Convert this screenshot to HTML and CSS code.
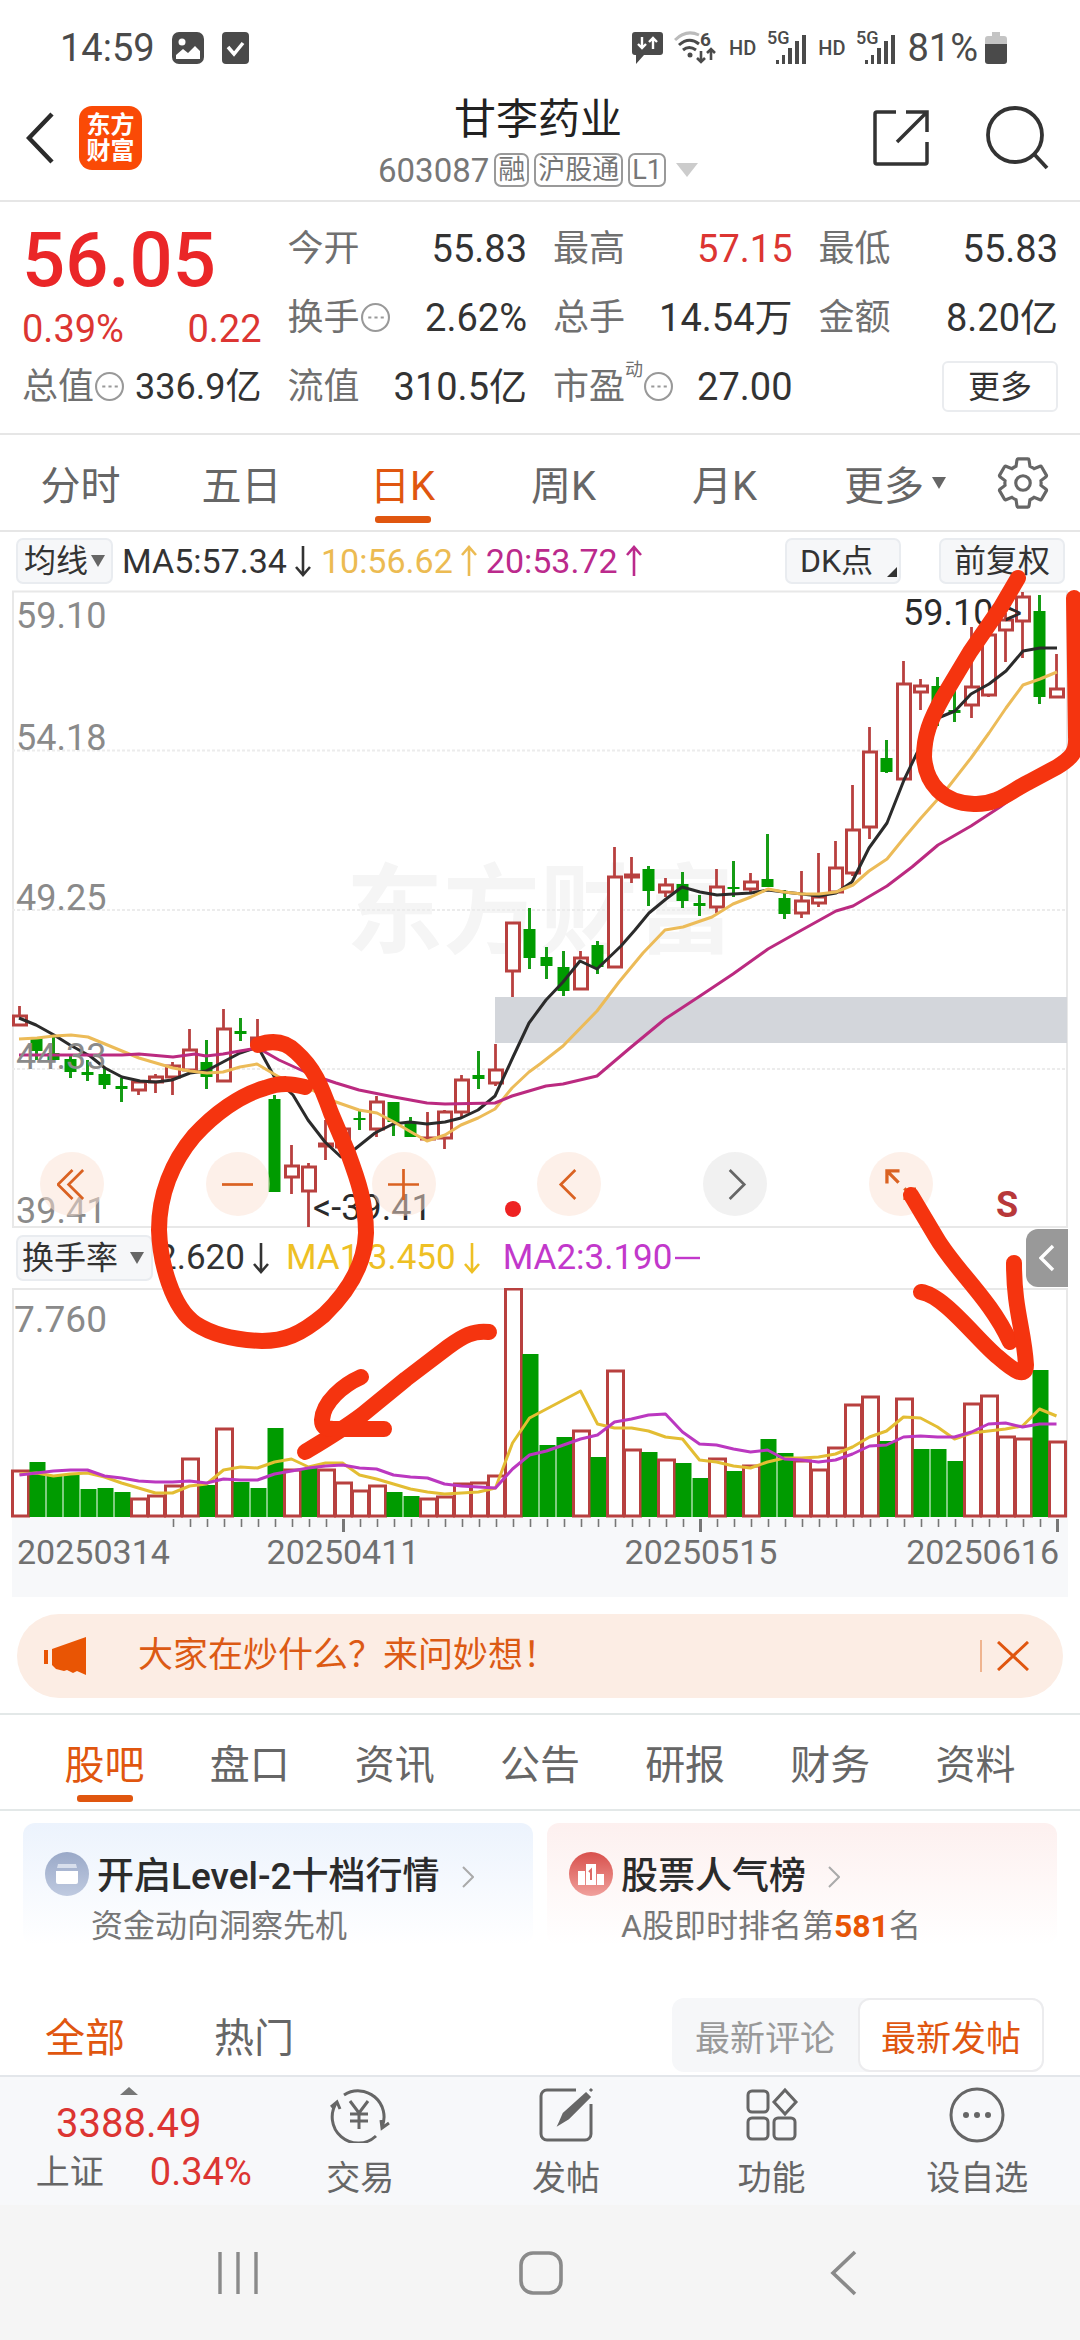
FILE: index.html
```html
<!DOCTYPE html>
<html lang="zh-CN">
<head>
    <meta charset="UTF-8">
    <meta name="viewport" content="width=device-width, initial-scale=1.0">
    <title>甘李药业 603087</title>
    <link rel="stylesheet" href="styles.css">
</head>
<body>
    <div class="status-bar">
        <span class="clock">14:59</span>
        <svg class="st-photo" width="32" height="32" viewBox="0 0 32 32"><rect width="32" height="32" rx="7" fill="#4a4a4a"/><circle cx="10" cy="10" r="3.5" fill="#fff"/><path d="M4 27V23l7-6 5 4 7-7 5 5v8z" fill="#fff"/></svg>
        <svg class="st-check" width="27" height="32" viewBox="0 0 27 32"><rect width="27" height="32" rx="4" fill="#4a4a4a"/><path d="M6 15l6 7 9-11" fill="none" stroke="#fff" stroke-width="3.5"/></svg>
        <div class="status-right">
            <svg width="31" height="32" viewBox="0 0 31 32"><path d="M3 0h25a3 3 0 0 1 3 3v17a3 3 0 0 1-3 3H12l-8 9v-9H3a3 3 0 0 1-3-3V3a3 3 0 0 1 3-3z" fill="#4a4a4a"/><path d="M10 5v11M6 12l4 4 4-4M21 17V7M17 10l4-4 4 4" fill="none" stroke="#fff" stroke-width="2.4"/></svg>
            <svg width="44" height="50" viewBox="0 -8 44 50" fill="none" stroke="#4a4a4a" stroke-width="3"><path d="M1 9Q12-2 25 4" stroke="#bbb"/><path d="M5 14q10-9 20-1M9 19q6-5 13 0"/><circle cx="16" cy="24" r="2.5" fill="#4a4a4a" stroke="none"/><path d="M27 20v11M23 27l4 4 4-4M37 29V18M33 22l4-4 4 4" stroke-width="2.6"/><text x="26" y="15" font-size="19" font-weight="700" fill="#4a4a4a" stroke="none">6</text></svg>
            <span class="hd">HD</span>
            <svg width="40" height="50" viewBox="0 -8 40 50" fill="#4a4a4a"><text x="0" y="13" font-size="18" font-weight="500">5G</text><path d="M9 29h3v4H9zM15 24h3v9h-3zM21 17h4v16h-4zM28 10h4v23h-4zM35 4h4v29h-4z"/></svg>
            <span class="hd">HD</span>
            <svg width="40" height="50" viewBox="0 -8 40 50" fill="#4a4a4a"><text x="0" y="13" font-size="18" font-weight="500">5G</text><path d="M9 29h3v4H9zM15 24h3v9h-3zM21 17h4v16h-4zM28 10h4v23h-4zM35 4h4v29h-4z"/></svg>
            <span class="battery-text">81%</span>
            <svg width="22" height="32" viewBox="0 0 22 32"><path d="M7 0h8v4h4a3 3 0 0 1 3 3v5H0V7a3 3 0 0 1 3-3h4z" fill="#c4c4c4"/><path d="M0 12h22v17a3 3 0 0 1-3 3H3a3 3 0 0 1-3-3z" fill="#4a4a4a"/></svg>
        </div>
    </div>

    <header class="header">
        <div class="header-left">
            <button class="icon-btn" aria-label="返回"><svg width="28" height="52" viewBox="0 0 28 52"><path d="M26 2L3 26l23 24" fill="none" stroke="#2b2b2b" stroke-width="4.5"/></svg></button>
            <a class="logo" href="#">东方<br>财富</a>
        </div>
        <div class="header-title">
            <h1>甘李药业</h1>
            <div class="code-row">
                <span class="code">603087</span>
                <span class="tag">融</span>
                <span class="tag">沪股通</span>
                <span class="tag">L1</span>
                <svg class="code-arrow" width="22" height="14" viewBox="0 0 22 14"><path d="M0 0h22L11 14z" fill="#ccc"/></svg>
            </div>
        </div>
        <div class="header-right">
            <button class="icon-btn" aria-label="分享"><svg width="58" height="58" viewBox="0 0 58 58" fill="none" stroke="#333" stroke-width="3.5"><path d="M24 3H5a2 2 0 0 0-2 2v48a2 2 0 0 0 2 2h48a2 2 0 0 0 2-2V33M34 3h21v20M55 3L25 33"/></svg></button>
            <button class="icon-btn" aria-label="搜索"><svg width="64" height="64" viewBox="0 0 64 64" fill="none" stroke="#333" stroke-width="3.8"><circle cx="29" cy="29" r="27"/><path d="M48 48l13 14"/></svg></button>
        </div>
    </header>

    <section class="quote">
        <div class="price-box">
            <div class="price">56.05</div>
            <div class="change"><span>0.39%</span><span>0.22</span></div>
        </div>
        <div class="item"><span class="label">今开</span><span class="value">55.83</span></div>
        <div class="item"><span class="label">最高</span><span class="value up">57.15</span></div>
        <div class="item"><span class="label">最低</span><span class="value">55.83</span></div>
        <div class="item"><span class="label">换手<svg class="info" viewBox="0 0 28 28"><circle cx="14" cy="14" r="13"/><path d="M7 14h3M13 14h3M19 14h3"/></svg></span><span class="value">2.62%</span></div>
        <div class="item"><span class="label">总手</span><span class="value">14.54万</span></div>
        <div class="item"><span class="label">金额</span><span class="value">8.20亿</span></div>
        <div class="item"><span class="label">总值<svg class="info" viewBox="0 0 28 28"><circle cx="14" cy="14" r="13"/><path d="M7 14h3M13 14h3M19 14h3"/></svg></span><span class="value value-fit">336.9亿</span></div>
        <div class="item"><span class="label">流值</span><span class="value">310.5亿</span></div>
        <div class="item"><span class="label">市盈<sup>动</sup><svg class="info" viewBox="0 0 28 28"><circle cx="14" cy="14" r="13"/><path d="M7 14h3M13 14h3M19 14h3"/></svg></span><span class="value">27.00</span></div>
        <div class="item"><button class="more-btn">更多</button></div>
    </section>

    <nav class="period-tabs">
        <button class="tab">分时</button>
        <button class="tab">五日</button>
        <button class="tab active">日K</button>
        <button class="tab">周K</button>
        <button class="tab">月K</button>
        <button class="tab tab-more">更多<svg width="14" height="12" viewBox="0 0 14 12"><path d="M0 0h14L7 12z" fill="#666"/></svg></button>
        <button class="icon-btn gear" aria-label="设置"><svg width="58" height="58" viewBox="0 0 24 24" fill="none" stroke="#666" stroke-width="1.3"><path d="M19.43 12.98c.04-.32.07-.64.07-.98s-.03-.66-.07-.98l2.11-1.65c.19-.15.24-.42.12-.64l-2-3.46c-.12-.22-.39-.3-.61-.22l-2.49 1c-.52-.4-1.08-.73-1.69-.98l-.38-2.65C14.46 2.18 14.25 2 14 2h-4c-.25 0-.46.18-.49.42l-.38 2.65c-.61.25-1.17.59-1.69.98l-2.49-1c-.23-.09-.49 0-.61.22l-2 3.46c-.13.22-.07.49.12.64l2.11 1.65c-.04.32-.07.65-.07.98s.03.66.07.98l-2.11 1.65c-.19.15-.24.42-.12.64l2 3.46c.12.22.39.3.61.22l2.49-1c.52.4 1.08.73 1.69.98l.38 2.65c.03.24.24.42.49.42h4c.25 0 .46-.18.49-.42l.38-2.65c.61-.25 1.17-.59 1.69-.98l2.49 1c.23.09.49 0 .61-.22l2-3.46c.12-.22.07-.49-.12-.64z"/><circle cx="12" cy="12" r="3"/></svg></button>
    </nav>

    <section class="chart">
        <div class="ma-bar">
            <button class="chip">均线<svg width="14" height="12" viewBox="0 0 14 12"><path d="M0 0h14L7 12z" fill="#666"/></svg></button>
            <span class="ma ma5">MA5:57.34<svg class="arrow" viewBox="0 0 18 32"><path d="M9 1v29M2 22l7 8 7-8"/></svg></span>
            <span class="ma ma10">10:56.62<svg class="arrow" viewBox="0 0 18 32"><path d="M9 31V2M2 10l7-8 7 8"/></svg></span>
            <span class="ma ma20">20:53.72<svg class="arrow" viewBox="0 0 18 32"><path d="M9 31V2M2 10l7-8 7 8"/></svg></span>
            <button class="chip chip-dk">DK点<svg width="10" height="10" viewBox="0 0 10 10"><path d="M10 0v10H0z" fill="#333"/></svg></button>
            <button class="chip chip-fq">前复权</button>
        </div>

        <div class="kline">
            <svg class="plot" viewBox="0 590 1080 638">
                <text x="346" y="945" class="watermark">东方财富</text>
                <g class="grid">
                    <path d="M12 591.5H1068M12 1227H1068M13 591V1228M1067 591V1228"/>
                    <path class="dash" d="M12 750.5H1067M12 910H1067M12 1069H1067"/>
                </g>
                <rect x="495" y="997" width="572" height="46" fill="#d3d6db"/>
                <g id="candles"></g>
                <polyline class="line ma5-line" points="19,1018 36,1025 54,1035 70,1045 90,1056 105,1068 122,1077 140,1081 156,1082 172,1080 190,1073 206,1071 223,1062 240,1053 258,1047 275,1078 293,1095 308,1120 325,1142 341,1157 355,1149 375,1133 393,1124 410,1122 427,1124 445,1122 461,1118 478,1110 495,1096 513,1057 529,1023 546,1000 563,982 580,961 597,969 621,946 635,930 649,913 666,899 682,887 700,892 717,895 733,894 751,893 768,890 784,892 802,894 819,896 836,893 852,882 869,848 887,823 904,780 917,753 938,718 955,711 971,694 989,684 1006,671 1023,651 1040,648 1057,648"/>
                <polyline class="line ma10-line" points="19,1039 37,1038 54,1036 71,1035 88,1037 105,1044 122,1051 139,1058 156,1063 173,1068 190,1071 207,1073 223,1072 240,1067 257,1064 279,1077 312,1090 336,1102 359,1110 377,1113 394,1122 411,1132 427,1141 445,1135 461,1125 478,1118 495,1109 512,1088 529,1072 540,1064 563,1046 597,1011 619,982 643,953 665,930 683,927 712,917 733,904 751,897 768,889 784,892 802,894 819,894 836,892 853,885 869,871 887,859 904,838 921,818 946,790 971,758 989,733 1006,708 1023,685 1040,679 1057,672"/>
                <polyline class="line ma20-line" points="19,1055 122,1055 139,1054 173,1057 195,1054 206,1056 223,1054 240,1051 258,1048 279,1060 312,1075 336,1083 359,1090 394,1097 427,1103 445,1104 495,1103 512,1096 529,1091 546,1086 563,1084 597,1076 630,1048 665,1019 700,996 733,974 768,949 800,931 836,911 853,906 887,886 912,867 938,845 971,826 1000,807 1026,788"/>
                <g class="axis">
                    <text x="16" y="628">59.10</text>
                    <text x="16" y="750">54.18</text>
                    <text x="16" y="910">49.25</text>
                    <text x="16" y="1069">44.33</text>
                    <text x="16" y="1223">39.41</text>
                </g>
                <text x="903" y="625" class="mark">59.10-&gt;</text>
                <text x="313" y="1220" class="mark">&lt;-39.41</text>
                <circle cx="513" cy="1209" r="8" fill="#ee2222"/>
                <text x="996" y="1217" class="sell">S</text>
            </svg>
            <div class="tools">
                <button class="tool" aria-label="更早"><svg viewBox="0 0 32 32"><path d="M16 1L1 16l15 15M27 1L12 16l15 15"/></svg></button>
                <button class="tool" aria-label="缩小"><svg viewBox="0 0 32 32"><path d="M0 16h32"/></svg></button>
                <button class="tool" aria-label="放大"><svg viewBox="0 0 32 32"><path d="M0 16h32M16 0v32"/></svg></button>
                <button class="tool" aria-label="左移"><svg viewBox="0 0 32 32"><path d="M22 1L7 16l15 15"/></svg></button>
                <button class="tool tool-gray" aria-label="右移"><svg viewBox="0 0 32 32"><path d="M10 1l15 15-15 15"/></svg></button>
                <button class="tool" aria-label="全屏"><svg viewBox="0 0 32 32"><path stroke-width="3.4" d="M2 15V2h13M2 2l12 12M31 19v12H19M30 30L20 20"/></svg></button>
            </div>
        </div>

        <div class="sub-bar">
            <button class="chip chip-sub">换手率<svg width="14" height="12" viewBox="0 0 14 12"><path d="M0 0h14L7 12z" fill="#666"/></svg></button>
            <span class="ma sub-now">2.620<svg class="arrow" viewBox="0 0 18 32"><path d="M9 1v29M2 22l7 8 7-8"/></svg></span>
            <span class="ma sub-ma1">MA1:3.450<svg class="arrow" viewBox="0 0 18 32"><path d="M9 1v29M2 22l7 8 7-8"/></svg></span>
            <span class="ma sub-ma2">MA2:3.190<svg class="flat" width="25" height="4" viewBox="0 0 25 4"><path d="M0 2h25" stroke="currentColor" stroke-width="2.4"/></svg></span>
            <button class="fold" aria-label="展开"><svg width="16" height="28" viewBox="0 0 16 28"><path d="M14 2L2 14l12 12" fill="none" stroke="#fff" stroke-width="3.4"/></svg></button>
        </div>

        <svg class="plot" viewBox="0 1288 1080 309">
            <rect x="12" y="1517" width="1056" height="80" fill="#f7f8fa"/>
            <g class="grid"><path d="M12 1289H1068M13 1288V1517M1067 1288V1517"/></g>
            <text x="14" y="1332" class="vol-max">7.760</text>
            <g id="volumes"></g>
            <polyline id="volMa1" class="line vol-ma1"/>
            <polyline id="volMa2" class="line vol-ma2"/>
            <g id="ticks"></g>
            <g class="dates">
                <text x="17" y="1564">20250314</text>
                <text x="343" y="1564" text-anchor="middle">20250411</text>
                <text x="701" y="1564" text-anchor="middle">20250515</text>
                <text x="1059" y="1564" text-anchor="end">20250616</text>
            </g>
        </svg>

        <svg class="notes" viewBox="0 532 1080 1065">
            <path d="M258 1045C275 1039 287 1043 296 1052C314 1068 321 1085 331 1113L348 1153C358 1180 366 1203 366 1233C365 1262 350 1290 324 1315C300 1335 284 1341 262 1341C234 1340 213 1335 196 1324C172 1308 160 1262 159 1230C159 1195 172 1162 194 1136C214 1114 240 1095 265 1088C282 1082 292 1084 305 1087"/>
            <path d="M1018 578L1001 607L970 652L943 697C930 720 924 736 924 757C926 783 942 803 974 804C998 805 1012 790 1029 782L1057 767C1070 759 1077 753 1076 737L1074 598"/>
            <path d="M489 1332C474 1330 463 1336 448 1347L406 1379L362 1415C342 1430 325 1440 305 1452"/>
            <path d="M361 1377C343 1385 323 1402 322 1420C322 1428 328 1429 334 1429H384"/>
            <path d="M911 1195L936 1237C955 1270 990 1298 1010 1342"/>
            <path d="M921 1292C944 1295 978 1341 998 1357C1014 1371 1026 1379 1026 1365C1024 1330 1014 1310 1014 1263"/>
        </svg>
    </section>

    <div class="banner">
        <svg width="42" height="38" viewBox="0 0 42 38" fill="#e95504"><path d="M0 13h4v14H0zM8 12L42 0v38l-9-4-4 2-6-3-3 1-8-2-4-4z"/></svg>
        <a href="#">大家在炒什么？来问妙想！</a>
        <button class="icon-btn banner-close" aria-label="关闭"><svg width="32" height="30" viewBox="0 0 32 30"><path d="M1 1l30 28M31 1L1 29" fill="none" stroke="#e0560f" stroke-width="3"/></svg></button>
    </div>

    <nav class="info-tabs">
        <button class="tab active">股吧</button>
        <button class="tab">盘口</button>
        <button class="tab">资讯</button>
        <button class="tab">公告</button>
        <button class="tab">研报</button>
        <button class="tab">财务</button>
        <button class="tab">资料</button>
    </nav>

    <div class="cards">
        <a class="card card-blue" href="#">
            <svg width="44" height="44" viewBox="0 0 44 44"><defs><linearGradient id="gb" x2="0" y2="1"><stop stop-color="#9aa9c8"/><stop offset="1" stop-color="#bfcae0"/></linearGradient></defs><circle cx="22" cy="22" r="22" fill="url(#gb)"/><path d="M11 19h22v11a2 2 0 0 1-2 2H13a2 2 0 0 1-2-2z" fill="#fff"/><path d="M13 12h18l1 4H12z" fill="#d8dfec"/></svg>
            <div class="card-text">
                <div class="card-title">开启Level-2十档行情<svg width="12" height="22" viewBox="0 0 12 22"><path d="M1 1l10 10L1 21" fill="none" stroke="#aaa" stroke-width="2"/></svg></div>
                <div class="card-sub">资金动向洞察先机</div>
            </div>
        </a>
        <a class="card card-red" href="#">
            <svg width="44" height="44" viewBox="0 0 44 44"><defs><linearGradient id="gr" x2="0" y2="1"><stop stop-color="#d8504c"/><stop offset="1" stop-color="#f0a09c"/></linearGradient></defs><circle cx="22" cy="22" r="22" fill="url(#gr)"/><path d="M9 19h7v14H9zM17 12h10v21H17zM28 22h7v11h-7z" fill="#fff"/><path d="M20 20l2-2v10" fill="none" stroke="#dd6965" stroke-width="2"/></svg>
            <div class="card-text">
                <div class="card-title">股票人气榜<svg width="12" height="22" viewBox="0 0 12 22"><path d="M1 1l10 10L1 21" fill="none" stroke="#aaa" stroke-width="2"/></svg></div>
                <div class="card-sub">A股即时排名第<b>581</b>名</div>
            </div>
        </a>
    </div>

    <div class="filter">
        <button class="filter-tab active">全部</button>
        <button class="filter-tab">热门</button>
        <div class="segment">
            <button>最新评论</button>
            <button class="on">最新发帖</button>
        </div>
    </div>

    <footer class="bottom-bar">
        <a class="index" href="#">
            <svg width="18" height="8" viewBox="0 0 18 8"><path d="M9 0l9 8H0z" fill="#777"/></svg>
            <div class="index-value">3388.49</div>
            <div class="index-row"><span>上证</span><span class="index-pct">0.34%</span></div>
        </a>
        <button class="action"><svg viewBox="0 0 60 56"><path d="M14 8a26 26 0 0 1 38 32M46 49A26 26 0 0 1 7 15M1 20l6-5 3 7M59 36l-7 5-1-8"/><path d="M20 14l9 12 9-12M29 26v16M20 27h18M20 34h18"/></svg>交易</button>
        <button class="action"><svg viewBox="0 0 60 56"><path d="M40 3H11a6 6 0 0 0-6 6v38a6 6 0 0 0 6 6h38a6 6 0 0 0 6-6V17"/><path d="M24 36l4-9L50 7l3 3-21 21zM54 4l2-2" fill="#666"/></svg>发帖</button>
        <button class="action"><svg viewBox="0 0 60 56"><rect x="6" y="4" width="20" height="21" rx="4"/><rect x="6" y="31" width="20" height="21" rx="4"/><rect x="32" y="31" width="21" height="21" rx="4"/><path d="M43 3l11 12-11 12-11-12z"/></svg>功能</button>
        <button class="action"><svg viewBox="0 0 60 56"><circle cx="30" cy="28" r="26"/><g fill="#666" stroke="none"><circle cx="19" cy="28" r="3"/><circle cx="30" cy="28" r="3"/><circle cx="41" cy="28" r="3"/></g></svg>设自选</button>
    </footer>

    <div class="nav-bar">
        <button class="icon-btn" aria-label="最近"><svg width="44" height="46" viewBox="0 0 44 46"><path d="M4 2v42M22 2v42M40 2v42" stroke="#8a8a8a" stroke-width="3.4"/></svg></button>
        <button class="icon-btn" aria-label="主页"><svg width="44" height="46" viewBox="0 0 44 46"><rect x="2" y="3" width="40" height="40" rx="12" fill="none" stroke="#8a8a8a" stroke-width="3.6"/></svg></button>
        <button class="icon-btn" aria-label="后退"><svg width="44" height="46" viewBox="0 0 44 46"><path d="M34 2L12 23l22 21" fill="none" stroke="#8a8a8a" stroke-width="3.6"/></svg></button>
    </div>

    <script src="chart.js"></script>
</body>
</html>
```
FILE: styles.css
```css
* {
    box-sizing: border-box;
}

body {
    margin: 0;
    background: #fff;
    color: #333;
    font-family: Roboto, "Noto Sans CJK SC", sans-serif;
}

button {
    margin: 0;
    padding: 0;
    border: 0;
    background: none;
    color: inherit;
    font: inherit;
}

a {
    color: inherit;
    text-decoration: none;
}

svg {
    display: block;
    flex: none;
}

.icon-btn {
    display: flex;
    align-items: center;
    justify-content: center;
}

/* status bar */
.status-bar {
    display: flex;
    align-items: center;
    height: 84px;
    padding: 12px 73px 0 60px;
    color: #4a4a4a;
    font-size: 38px;
    line-height: 40px;
}

.st-photo {
    margin-left: 17px;
}

.st-check {
    margin-left: 18px;
}

.status-right {
    display: flex;
    align-items: center;
    gap: 11px;
    margin-left: auto;
}

.hd {
    font-size: 20px;
    font-weight: 500;
}

.battery-text {
    margin-right: -4px;
}

/* header */
.header {
    display: grid;
    grid-template-columns: 1fr auto 1fr;
    align-items: center;
    height: 118px;
    padding: 0 30px 10px 26px;
    border-bottom: 2px solid #e6e6e6;
}

.header-left,
.header-right {
    display: flex;
    align-items: center;
}

.header-left {
    gap: 25px;
}

.header-right {
    justify-content: flex-end;
    gap: 56px;
}

.logo {
    width: 63px;
    height: 64px;
    padding-top: 6px;
    border-radius: 13px;
    background: #fa4a06;
    color: #fff;
    font-size: 24px;
    font-weight: 700;
    line-height: 26px;
    text-align: center;
}

.header-title {
    align-self: start;
    margin-top: 8px;
    text-align: center;
}

.header h1 {
    margin: 0;
    font-size: 42px;
    font-weight: 400;
    line-height: 56px;
    color: #222;
}

.code-row {
    display: flex;
    align-items: center;
    gap: 5px;
    height: 44px;
    color: #777;
}

.code {
    font-size: 33px;
}

.tag {
    padding: 0 2px;
    border: 2px solid #999;
    border-radius: 7px;
    font-size: 27px;
    line-height: 30px;
}

.code-arrow {
    margin-left: 5px;
}

/* quote */
.quote {
    display: grid;
    grid-template-columns: repeat(4, 1fr);
    grid-auto-rows: 69px;
    column-gap: 26px;
    padding: 12px 22px;
    border-bottom: 2px solid #e6e6e6;
}

.price-box {
    grid-row: span 2;
    padding-top: 8px;
}

.price {
    color: #ea2628;
    font-size: 76px;
    font-weight: 500;
    line-height: 76px;
}

.change {
    display: flex;
    justify-content: space-between;
    margin-top: 11px;
    color: #dc3532;
    font-size: 38px;
    line-height: 40px;
}

.item {
    display: flex;
    align-items: center;
    justify-content: space-between;
    white-space: nowrap;
}

.label {
    display: flex;
    align-items: center;
    color: #707070;
    font-size: 36px;
    line-height: 40px;
}

.label sup {
    align-self: flex-start;
    font-size: 18px;
    line-height: 6px;
}

.info {
    width: 29px;
    height: 29px;
    margin-left: 1px;
    fill: none;
    stroke: #999;
    stroke-width: 2;
}

.value {
    font-size: 38px;
    line-height: 40px;
}

.value-fit {
    font-size: 36px;
}

.up {
    color: #dc3532;
}

.more-btn {
    width: 116px;
    height: 51px;
    margin-left: auto;
    border: 2px solid #eaecef;
    border-radius: 6px;
    font-size: 32px;
    line-height: 44px;
}

/* tabs */
.period-tabs,
.info-tabs {
    display: flex;
    height: 97px;
    border-bottom: 2px solid #e6e6e6;
    color: #666;
    font-size: 40px;
}

.tab {
    position: relative;
    flex: 1;
}

.period-tabs .tab-more {
    display: flex;
    flex: 0 0 180px;
    align-items: center;
    justify-content: center;
    gap: 8px;
}

.gear {
    flex: 0 0 95px;
    justify-content: flex-start;
    padding-left: 9px;
}

.tab.active {
    color: #e0560f;
}

.tab.active::after {
    content: "";
    position: absolute;
    bottom: 7px;
    left: 50%;
    width: 56px;
    height: 7px;
    margin-left: -28px;
    border-radius: 3px;
    background: #e0560f;
}

/* chart */
.chart {
    position: relative;
}

.ma-bar {
    display: flex;
    align-items: center;
    height: 58px;
    padding: 0 15px 0 16px;
}

.chip {
    display: flex;
    align-items: center;
    height: 46px;
    padding: 0 6px;
    border: 2px solid #e9ecf0;
    border-radius: 7px;
    background: #f6f7f9;
    font-size: 32px;
    line-height: 40px;
    white-space: nowrap;
}

.chip svg {
    margin-left: 3px;
}

.ma {
    display: flex;
    align-items: center;
    gap: 7px;
    font-size: 34px;
    line-height: 40px;
}

.arrow {
    width: 18px;
    height: 32px;
    fill: none;
    stroke: currentColor;
    stroke-width: 2.6;
}

.ma5 {
    margin-left: 9px;
    color: #333;
}

.ma10 {
    margin-left: 9px;
    color: #ecbb52;
}

.ma20 {
    margin-left: 8px;
    color: #bb2a8c;
}

.chip-dk {
    margin-left: auto;
    padding: 0 2px 0 13px;
}

.chip-dk svg {
    align-self: flex-end;
    margin: 0 0 5px 14px;
}

.chip-fq {
    margin-left: 38px;
    padding: 0 13px;
}

.plot {
    width: 100%;
    height: auto;
}

.kline {
    position: relative;
}

.watermark {
    fill: #f5f5f5;
    font-size: 97px;
    font-weight: 700;
}

.grid path {
    fill: none;
    stroke: #e8e8e8;
    stroke-width: 2;
}

.grid .dash {
    stroke: #ececec;
    stroke-dasharray: 3 2;
}

.line {
    fill: none;
    stroke-width: 3;
    stroke-linejoin: round;
}

.ma5-line { stroke: #2b2b2b; }
.ma10-line { stroke: #ecbb58; }
.ma20-line { stroke: #bb2a80; }
.vol-ma1 { stroke: #e3bd33; }
.vol-ma2 { stroke: #bb38c0; }

.axis {
    fill: #8a8a8a;
    font-size: 36px;
}

.mark {
    fill: #2b2b2b;
    font-size: 36px;
}

.sell {
    fill: #b8383a;
    font-size: 36px;
    font-weight: 700;
}

.vol-max {
    fill: #8a8a8a;
    font-size: 37px;
}

.dates {
    fill: #707070;
    font-size: 34px;
}

.up-shape {
    fill: #fff;
    stroke: #b8403f;
    stroke-width: 3;
}

.down-shape {
    fill: #009b00;
}

.wick-up { stroke: #b8403f; stroke-width: 2.8; }
.wick-down { stroke: #169c16; stroke-width: 3; }
.tick { stroke: #777; stroke-width: 1.6; }
.tick-major { stroke: #777; stroke-width: 3; }

.tools {
    position: absolute;
    right: 147px;
    bottom: 12px;
    left: 40px;
    display: flex;
    justify-content: space-between;
}

.tool {
    display: flex;
    align-items: center;
    justify-content: center;
    width: 64px;
    height: 64px;
    border-radius: 50%;
    background: rgba(252, 226, 211, 0.5);
}

.tool svg {
    width: 31px;
    height: 31px;
    fill: none;
    stroke: #da6222;
    stroke-width: 2.8;
}

.tool-gray {
    background: rgba(228, 228, 228, 0.5);
}

.tool-gray svg {
    stroke: #666;
}

.sub-bar {
    display: flex;
    align-items: center;
    height: 60px;
    padding: 0 12px 0 16px;
}

.chip-sub {
    padding: 0 7px 0 4px;
}

.chip-sub svg {
    margin-left: 12px;
}

.sub-bar .ma {
    font-size: 35px;
}

.sub-now {
    margin-left: 4px;
}

.sub-ma1 {
    margin-left: 16px;
    color: #eec024;
}

.sub-ma2 {
    margin-left: 22px;
    color: #c238cb;
}

.sub-ma2 .flat {
    margin-left: -4px;
}

.fold {
    display: flex;
    align-items: center;
    justify-content: center;
    width: 42px;
    height: 58px;
    margin-left: auto;
    border-radius: 12px 0 0 12px;
    background: #999;
}

.notes {
    position: absolute;
    top: 0;
    left: 0;
    width: 100%;
    pointer-events: none;
    fill: none;
    stroke: #f5340f;
    stroke-width: 16;
    stroke-linecap: round;
    stroke-linejoin: round;
}

/* banner */
.banner {
    display: flex;
    align-items: center;
    height: 84px;
    margin: 17px 17px 15px;
    padding: 0 34px 0 27px;
    border-radius: 42px;
    background: #fcede4;
    color: #dc5a14;
    font-size: 35px;
    line-height: 40px;
}

.banner a {
    margin-left: 52px;
}

.banner-close {
    height: 32px;
    margin-left: auto;
    padding-left: 15px;
    border-left: 2px solid #efb48f;
}

.info-tabs {
    height: 98px;
    padding: 0 32px;
    border-top: 2px solid #e3e8e8;
    border-bottom-color: #e3e8e8;
}

/* cards */
.cards {
    display: grid;
    grid-template-columns: 1fr 1fr;
    gap: 14px;
    padding: 12px 23px 0;
}

.card {
    display: flex;
    align-items: flex-start;
    gap: 8px;
    height: 122px;
    padding: 29px 22px 0;
    border-radius: 12px;
}

.card-blue {
    background: linear-gradient(#ecf3fd, #fff);
}

.card-red {
    background: linear-gradient(#fdf0ef, #fff);
}

.card-title {
    display: flex;
    align-items: center;
    gap: 22px;
    color: #2b2b2b;
    font-size: 37px;
    font-weight: 500;
    line-height: 50px;
}

.card-sub {
    color: #777;
    font-size: 32px;
    line-height: 48px;
}

.card-blue .card-sub {
    margin-left: -6px;
}

.card-sub b {
    color: #e95504;
}

/* filter row */
.filter {
    display: flex;
    align-items: center;
    height: 132px;
    padding: 50px 36px 0 45px;
    color: #666;
    font-size: 40px;
    border-bottom: 2px solid #e3e6ea;
}

.filter-tab + .filter-tab {
    margin-left: 89px;
}

.filter .active {
    color: #e0560f;
}

.segment {
    display: flex;
    height: 74px;
    margin-left: auto;
    border-radius: 12px;
    background: #f6f7f9;
    color: #999;
    font-size: 35px;
}

.segment button {
    width: 186px;
}

.segment .on {
    border: 2px solid #ececee;
    border-radius: 12px;
    background: #fff;
    color: #e0560f;
}

/* bottom */
.bottom-bar {
    display: flex;
    height: 128px;
    background: #f7f8fa;
    color: #666;
    font-size: 34px;
    line-height: 44px;
}

.index {
    display: flex;
    flex: 258;
    flex-direction: column;
    align-items: center;
    padding-top: 10px;
}

.index-value {
    margin-top: 7px;
    color: #dc3532;
    font-size: 40px;
    line-height: 44px;
}

.index-row {
    display: flex;
    gap: 46px;
    margin-top: 4px;
    padding-left: 30px;
}

.index-pct {
    color: #dc3532;
    font-size: 38px;
}

.action {
    display: flex;
    flex: 206;
    flex-direction: column;
    align-items: center;
    gap: 13px;
    padding-top: 10px;
}

.action svg {
    width: 60px;
    height: 56px;
    fill: none;
    stroke: #666;
    stroke-width: 3;
}

.nav-bar {
    display: flex;
    align-items: flex-start;
    justify-content: space-between;
    height: 135px;
    padding: 45px 215px 0 216px;
    background: #f5f5f5;
}
```
FILE: chart.js
```js
// [up, high, body top, body bottom, low]
var candles = [
    [1, 1006, 1016, 1025, 1026], [0, 1037, 1038, 1051, 1060], [0, 1037, 1053, 1060, 1062], [0, 1055, 1059, 1072, 1078],
    [0, 1060, 1072, 1075, 1081], [0, 1068, 1074, 1085, 1089], [0, 1078, 1086, 1089, 1102], [1, 1080, 1082, 1090, 1095],
    [1, 1074, 1077, 1082, 1093], [1, 1062, 1066, 1077, 1095], [1, 1029, 1050, 1070, 1071], [0, 1040, 1062, 1077, 1089],
    [1, 1009, 1029, 1081, 1081], [0, 1018, 1031, 1034, 1041], [1, 1019, 1038, 1045, 1045], [0, 1095, 1099, 1192, 1192],
    [1, 1145, 1166, 1177, 1194], [1, 1163, 1167, 1191, 1227], [1, 1120, 1144, 1146, 1160], [1, 1127, 1129, 1147, 1150],
    [0, 1111, 1118, 1120, 1130], [1, 1096, 1102, 1129, 1137], [0, 1102, 1102, 1122, 1136], [0, 1117, 1123, 1137, 1137],
    [1, 1112, 1138, 1139, 1140], [1, 1110, 1112, 1138, 1149], [1, 1075, 1080, 1112, 1117], [0, 1051, 1075, 1079, 1089],
    [1, 1044, 1070, 1083, 1086], [1, 923, 923, 971, 997], [0, 908, 929, 958, 969], [0, 947, 957, 966, 979],
    [0, 951, 967, 991, 996], [1, 951, 958, 989, 989], [0, 941, 945, 967, 974], [1, 847, 877, 967, 967],
    [1, 857, 875, 877, 883], [0, 866, 869, 891, 906], [1, 878, 885, 892, 897], [0, 872, 884, 901, 908],
    [0, 895, 903, 906, 916], [1, 869, 887, 907, 913], [0, 861, 887, 889, 897], [1, 873, 882, 889, 893],
    [0, 834, 879, 887, 887], [0, 890, 898, 914, 919], [1, 871, 901, 913, 918], [1, 853, 897, 903, 907],
    [1, 841, 868, 892, 892], [1, 785, 830, 873, 876], [1, 727, 752, 827, 839], [0, 740, 758, 772, 773],
    [1, 661, 684, 779, 779], [1, 679, 686, 692, 710], [0, 677, 686, 713, 726], [0, 683, 710, 713, 722],
    [1, 627, 687, 705, 718], [1, 630, 635, 695, 697], [1, 613, 620, 630, 662], [1, 592, 597, 621, 658],
    [0, 595, 611, 697, 704], [1, 654, 689, 697, 697]
];

// top of each turnover bar, negative = down day
var volumes = [
    1470, -1462, -1475, -1474, -1489, -1488, -1492, 1498, 1495, 1485, 1458, -1485, 1428, -1482, -1488, -1428,
    1469, -1468, 1469, 1482, 1490, 1485, -1492, -1496, 1498, 1496, 1483, 1482, 1475, 1288, -1354, -1445,
    -1437, 1430, -1457, 1370, 1449, -1452, 1459, -1463, -1478, 1458, -1471, 1465, -1439, -1453, 1460, 1469,
    1447, 1404, 1396, -1441, 1398, -1449, -1449, -1461, 1403, 1395, 1436, 1438, -1370, 1441
];

var ma1 = [
    1474, 1473, 1476, 1474, 1473, 1477, 1483, 1488, 1493, 1493, 1486, 1484, 1470, 1467, 1468, 1462,
    1459, 1467, 1463, 1463, 1475, 1479, 1484, 1489, 1492, 1494, 1493, 1492, 1488, 1443, 1418, 1409,
    1400, 1391, 1424, 1428, 1428, 1431, 1437, 1439, 1460, 1462, 1466, 1468, 1462, 1458, 1458, 1457,
    1454, 1447, 1437, 1431, 1417, 1418, 1427, 1439, 1433, 1431, 1429, 1426, 1409, 1416
];

var ma2 = [
    1475, 1473, 1471, 1470, 1470, 1476, 1478, 1481, 1482, 1482, 1481, 1483, 1479, 1480, 1480, 1474,
    1471, 1468, 1466, 1465, 1468, 1469, 1475, 1477, 1478, 1484, 1486, 1487, 1488, 1469, 1455, 1451,
    1445, 1439, 1435, 1422, 1419, 1415, 1414, 1432, 1444, 1445, 1449, 1452, 1450, 1459, 1460, 1462,
    1460, 1454, 1446, 1445, 1437, 1436, 1437, 1437, 1432, 1424, 1423, 1427, 1424, 1424
];

var STEP = 17;
var START = 19.5;
var BASE = 1516;

function x(i) {
    return START + STEP * i;
}

function rect(cls, left, top, width, height) {
    return '<rect class="' + cls + '" x="' + left + '" y="' + top + '" width="' + width + '" height="' + height + '"/>';
}

function vline(cls, cx, y1, y2) {
    return '<path class="' + cls + '" d="M' + cx + ' ' + y1 + 'V' + y2 + '"/>';
}

document.getElementById('candles').innerHTML = candles.map(function (c, i) {
    var body = Math.max(c[3] - c[2], 1);
    return c[0]
        ? vline('wick-up', x(i), c[1], c[4]) + rect('up-shape', x(i) - 6, c[2], 13, body)
        : vline('wick-down', x(i), c[1], c[4]) + rect('down-shape', x(i) - 6, c[2], 12, body);
}).join('');

document.getElementById('volumes').innerHTML = volumes.map(function (v, i) {
    var top = Math.abs(v);
    return v > 0
        ? rect('up-shape', x(i) - 7, top + 1, 16, BASE - top - 1)
        : rect('down-shape', x(i) - 7, top, 16, BASE - top + 1);
}).join('');

function points(list) {
    return list.map(function (y, i) { return x(i) + ',' + y; }).join(' ');
}

document.getElementById('volMa1').setAttribute('points', points(ma1));
document.getElementById('volMa2').setAttribute('points', points(ma2));

var ticks = '';
for (var i = 9; i < candles.length; i++) {
    var major = i === 19 || i === 40 || i === 61;
    ticks += vline(major ? 'tick-major' : 'tick', x(i) + 1, 1519, major ? 1532 : 1527);
}
document.getElementById('ticks').innerHTML = ticks;
```
